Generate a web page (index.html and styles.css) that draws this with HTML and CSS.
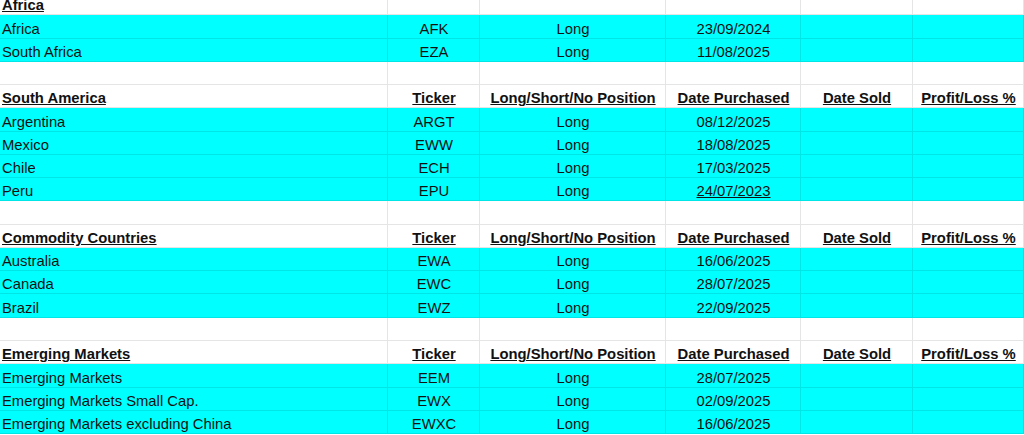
FILE: index.html
```html
<!DOCTYPE html>
<html lang="en">
<head>
<meta charset="utf-8">
<title>Portfolio sheet</title>
<link rel="stylesheet" href="styles.css">
</head>
<body>
<div class="sheet">
  <div class="row head">
    <div class="cell name">Africa</div><div class="cell"></div><div class="cell"></div><div class="cell"></div><div class="cell"></div><div class="cell"></div>
  </div>
  <div class="row data">
    <div class="cell name">Africa</div><div class="cell">AFK</div><div class="cell">Long</div><div class="cell">23/09/2024</div><div class="cell"></div><div class="cell"></div>
  </div>
  <div class="row data">
    <div class="cell name">South Africa</div><div class="cell">EZA</div><div class="cell">Long</div><div class="cell">11/08/2025</div><div class="cell"></div><div class="cell"></div>
  </div>
  <div class="row">
    <div class="cell"></div><div class="cell"></div><div class="cell"></div><div class="cell"></div><div class="cell"></div><div class="cell"></div>
  </div>

  <div class="row head">
    <div class="cell name">South America</div><div class="cell">Ticker</div><div class="cell">Long/Short/No Position</div><div class="cell">Date Purchased</div><div class="cell">Date Sold</div><div class="cell">Profit/Loss %</div>
  </div>
  <div class="row data">
    <div class="cell name">Argentina</div><div class="cell">ARGT</div><div class="cell">Long</div><div class="cell">08/12/2025</div><div class="cell"></div><div class="cell"></div>
  </div>
  <div class="row data">
    <div class="cell name">Mexico</div><div class="cell">EWW</div><div class="cell">Long</div><div class="cell">18/08/2025</div><div class="cell"></div><div class="cell"></div>
  </div>
  <div class="row data">
    <div class="cell name">Chile</div><div class="cell">ECH</div><div class="cell">Long</div><div class="cell">17/03/2025</div><div class="cell"></div><div class="cell"></div>
  </div>
  <div class="row data">
    <div class="cell name">Peru</div><div class="cell">EPU</div><div class="cell">Long</div><div class="cell"><span class="ul">24/07/2023</span></div><div class="cell"></div><div class="cell"></div>
  </div>
  <div class="row">
    <div class="cell"></div><div class="cell"></div><div class="cell"></div><div class="cell"></div><div class="cell"></div><div class="cell"></div>
  </div>

  <div class="row head">
    <div class="cell name">Commodity Countries</div><div class="cell">Ticker</div><div class="cell">Long/Short/No Position</div><div class="cell">Date Purchased</div><div class="cell">Date Sold</div><div class="cell">Profit/Loss %</div>
  </div>
  <div class="row data">
    <div class="cell name">Australia</div><div class="cell">EWA</div><div class="cell">Long</div><div class="cell">16/06/2025</div><div class="cell"></div><div class="cell"></div>
  </div>
  <div class="row data">
    <div class="cell name">Canada</div><div class="cell">EWC</div><div class="cell">Long</div><div class="cell">28/07/2025</div><div class="cell"></div><div class="cell"></div>
  </div>
  <div class="row data">
    <div class="cell name">Brazil</div><div class="cell">EWZ</div><div class="cell">Long</div><div class="cell">22/09/2025</div><div class="cell"></div><div class="cell"></div>
  </div>
  <div class="row">
    <div class="cell"></div><div class="cell"></div><div class="cell"></div><div class="cell"></div><div class="cell"></div><div class="cell"></div>
  </div>

  <div class="row head">
    <div class="cell name">Emerging Markets</div><div class="cell">Ticker</div><div class="cell">Long/Short/No Position</div><div class="cell">Date Purchased</div><div class="cell">Date Sold</div><div class="cell">Profit/Loss %</div>
  </div>
  <div class="row data">
    <div class="cell name">Emerging Markets</div><div class="cell">EEM</div><div class="cell">Long</div><div class="cell">28/07/2025</div><div class="cell"></div><div class="cell"></div>
  </div>
  <div class="row data">
    <div class="cell name">Emerging Markets Small Cap.</div><div class="cell">EWX</div><div class="cell">Long</div><div class="cell">02/09/2025</div><div class="cell"></div><div class="cell"></div>
  </div>
  <div class="row data">
    <div class="cell name">Emerging Markets excluding China</div><div class="cell">EWXC</div><div class="cell">Long</div><div class="cell">16/06/2025</div><div class="cell"></div><div class="cell"></div>
  </div>
</div>
</body>
</html>
```

FILE: styles.css
```css
html, body {
  margin: 0;
  padding: 0;
  background: #ffffff;
  overflow: hidden;
}

.sheet {
  margin-top: -8px;
  font-family: "Liberation Sans", Arial, sans-serif;
  font-size: 14.8px;
  color: #111111;
}

.row {
  display: grid;
  grid-template-columns: 388px 92px 186px 135px 112px 111px;
  height: 23.28px;
  box-sizing: border-box;
  border-bottom: 1px solid rgba(0, 0, 0, 0.1);
}

.row.data {
  background: #00ffff;
}

.cell {
  display: flex;
  align-items: flex-end;
  justify-content: center;
  box-sizing: border-box;
  padding: 0 1px 0 2px;
  border-right: 1px solid rgba(0, 0, 0, 0.1);
  line-height: 17px;
  white-space: nowrap;
  overflow: hidden;
}

.cell.name {
  justify-content: flex-start;
}

.row.head .cell {
  font-weight: bold;
  text-decoration: underline;
}

.ul {
  text-decoration: underline;
}
```
